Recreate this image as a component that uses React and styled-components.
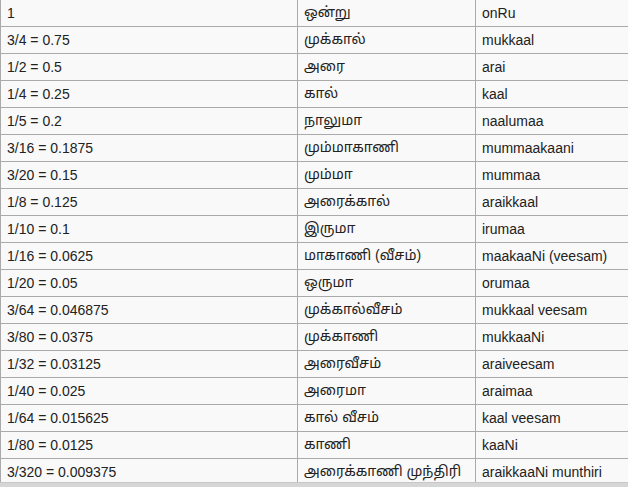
import React from "react";
import styled, { createGlobalStyle } from "styled-components";

const rows = [
  ["1", "ஒன்று", "onRu"],
  ["3/4 = 0.75", "முக்கால்", "mukkaal"],
  ["1/2 = 0.5", "அரை", "arai"],
  ["1/4 = 0.25", "கால்", "kaal"],
  ["1/5 = 0.2", "நாலுமா", "naalumaa"],
  ["3/16 = 0.1875", "மும்மாகாணி", "mummaakaani"],
  ["3/20 = 0.15", "மும்மா", "mummaa"],
  ["1/8 = 0.125", "அரைக்கால்", "araikkaal"],
  ["1/10 = 0.1", "இருமா", "irumaa"],
  ["1/16 = 0.0625", "மாகாணி (வீசம்)", "maakaaNi (veesam)"],
  ["1/20 = 0.05", "ஒருமா", "orumaa"],
  ["3/64 = 0.046875", "முக்கால்வீசம்", "mukkaal veesam"],
  ["3/80 = 0.0375", "முக்காணி", "mukkaaNi"],
  ["1/32 = 0.03125", "அரைவீசம்", "araiveesam"],
  ["1/40 = 0.025", "அரைமா", "araimaa"],
  ["1/64 = 0.015625", "கால் வீசம்", "kaal veesam"],
  ["1/80 = 0.0125", "காணி", "kaaNi"],
  ["3/320 = 0.009375", "அரைக்காணி முந்திரி", "araikkaaNi munthiri"],
];

const GlobalStyle = createGlobalStyle`
  html, body {
    margin: 0;
    padding: 0;
    background: #ffffff;
    overflow: hidden;
  }
`;

const Page = styled.div`
  width: 628px;
  height: 487px;
  display: flex;
  flex-direction: column;
  overflow: hidden;
`;

const Viewport = styled.div`
  height: 482px;
  overflow: hidden;
`;

const Table = styled.table`
  border-collapse: collapse;
  margin-top: -1px;
  width: 628px;
  table-layout: fixed;
  background: #f9f9f9;
  font-family: "Liberation Sans", Arial, "Noto Sans Tamil", "Lohit Tamil", sans-serif;
  font-size: 14px;
  color: #222222;
`;

const Cell = styled.td`
  border: 1px solid #aaaaaa;
  height: 27px;
  box-sizing: border-box;
  padding: 0 6px;
  white-space: nowrap;
  vertical-align: middle;
`;

const ScrollBar = styled.div`
  flex: 1;
  background: #d6d6d6;
  border-top: 1px solid #c8c8c8;
`;

export default function App() {
  return (
    <>
      <GlobalStyle />
      <Page>
        <Viewport>
          <Table>
            <colgroup>
              <col style={{ width: 297 }} />
              <col style={{ width: 178 }} />
              <col style={{ width: 153 }} />
            </colgroup>
            <tbody>
              {rows.map((r) => (
                <tr key={r[0]}>
                  <Cell>{r[0]}</Cell>
                  <Cell>{r[1]}</Cell>
                  <Cell>{r[2]}</Cell>
                </tr>
              ))}
            </tbody>
          </Table>
        </Viewport>
        <ScrollBar />
      </Page>
    </>
  );
}
